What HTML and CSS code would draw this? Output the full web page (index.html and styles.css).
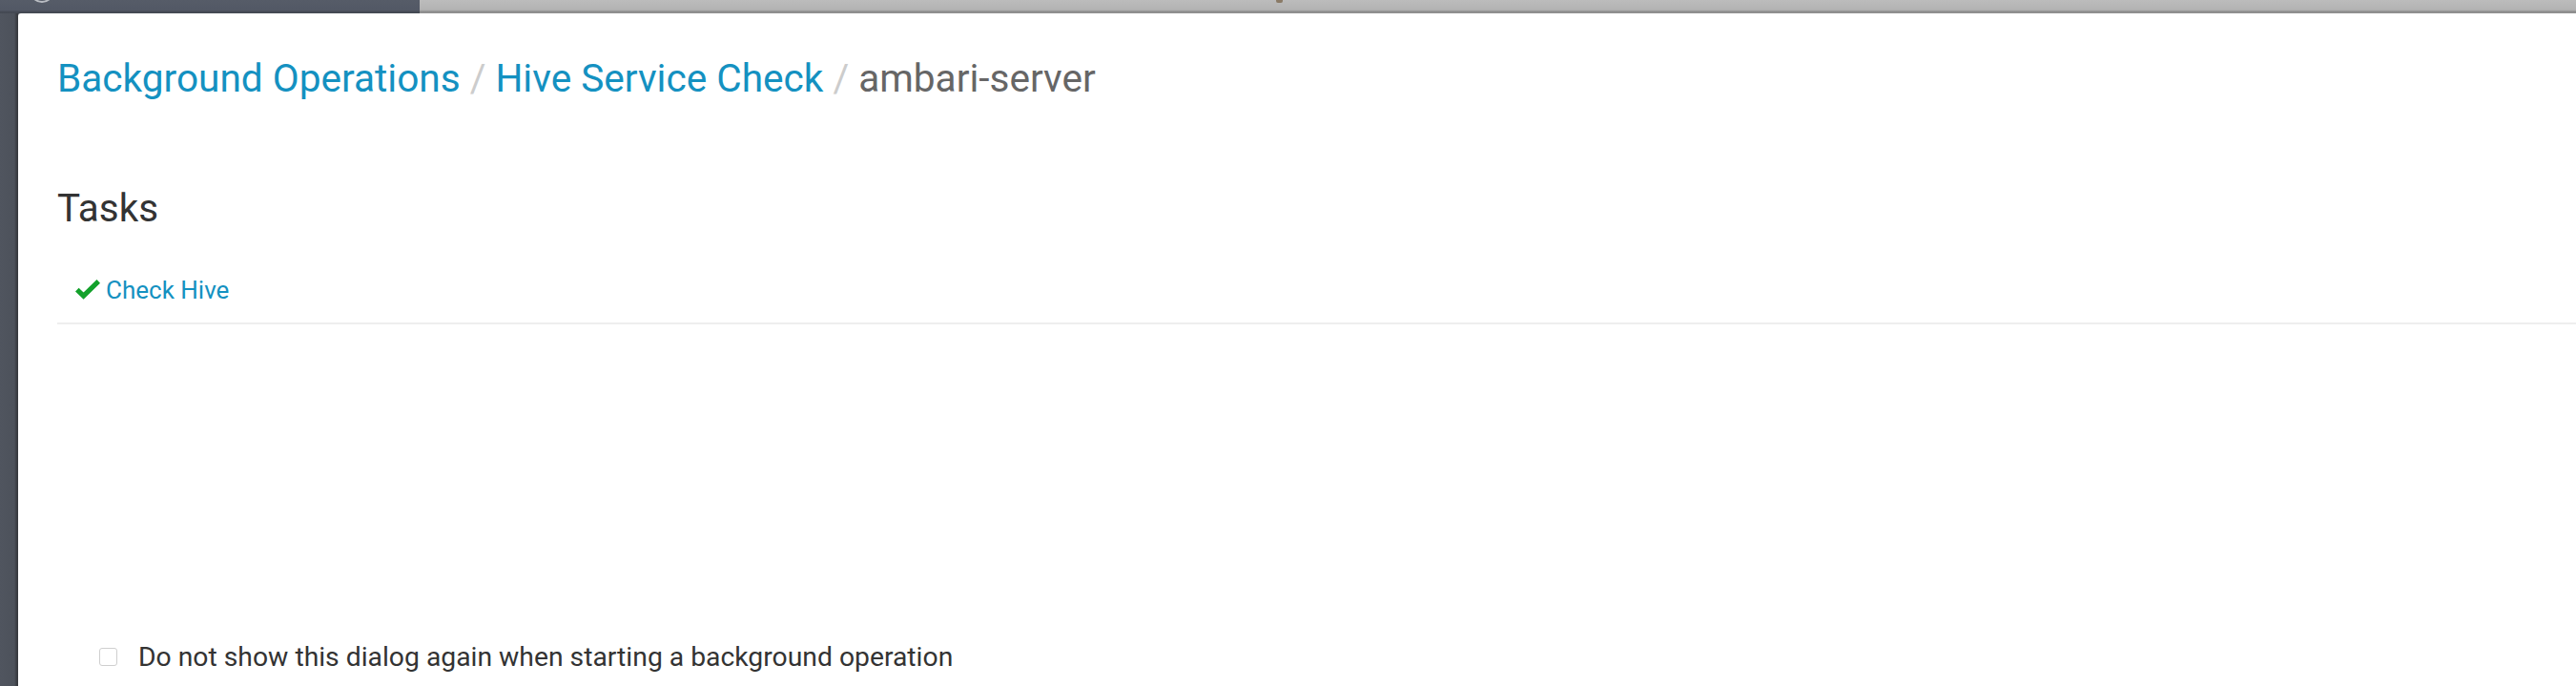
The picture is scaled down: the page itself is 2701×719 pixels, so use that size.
FILE: index.html
```html
<!DOCTYPE html>
<html lang="en">
<head>
<meta charset="utf-8">
<title>Background Operations</title>
<link rel="stylesheet" href="styles.css">
</head>
<body>
<div class="screen">
  <div class="topbar">
    <div class="topbar-dark"><span class="logo-ring"></span></div>
    <div class="topbar-light"><span class="topbar-mark"></span></div>
  </div>
  <div class="stage">
    <div class="gutter"></div>
    <div class="modal">
      <div class="modal-header">
        <nav class="breadcrumb">
          <a class="crumb">Background Operations</a><span class="crumb-sep">/</span><a class="crumb">Hive Service Check</a><span class="crumb-sep">/</span><span class="crumb-current">ambari-server</span>
        </nav>
      </div>
      <div class="modal-body">
        <h4 class="tasks-title">Tasks</h4>
        <div class="task-list">
          <div class="task-row">
            <svg class="icon-ok" viewBox="0 0 26 21" width="26" height="21" aria-hidden="true"><polyline points="1.8,10.6 8.6,17.2 24.3,1.9" fill="none" stroke="currentColor" stroke-width="5.2" stroke-linejoin="miter" stroke-linecap="butt"/></svg>
            <a class="task-link">Check Hive</a>
          </div>
        </div>
      </div>
      <div class="modal-footer">
        <label class="dont-show"><span class="checkbox"></span><span class="dont-show-text">Do not show this dialog again when starting a background operation</span></label>
      </div>
    </div>
  </div>
</div>
</body>
</html>
```
FILE: styles.css
```css
html, body {
  margin: 0;
  padding: 0;
  background: #50555f;
}

.screen {
  width: 2701px;
  height: 719px;
  overflow: hidden;
  display: flex;
  flex-direction: column;
  font-family: Roboto, "Liberation Sans", sans-serif;
}

.topbar {
  height: 14px;
  display: flex;
  flex: none;
}

.topbar-dark {
  width: 440px;
  background: linear-gradient(to bottom, #565c68 0, #525865 11px, #464b55 12px, #434852 14px);
  overflow: hidden;
  padding-left: 31px;
  box-sizing: border-box;
}

.logo-ring {
  display: block;
  width: 26px;
  height: 26px;
  margin-top: -23px;
  border-radius: 50%;
  border: 2px solid #b9bcc2;
  box-sizing: border-box;
}

.topbar-light {
  flex: 1;
  background: linear-gradient(to bottom, #bcbcbc 0, #b3b3b3 10px, #a9a9a9 11px, #8d8d8d 12px, #8a8a8a 13px, #9a9a9a 14px);
  overflow: hidden;
  padding-left: 898px;
}

.topbar-mark {
  display: block;
  width: 7px;
  height: 3px;
  background: #8a7a66;
  border-radius: 0 0 2px 2px;
}

.stage {
  flex: 1;
  display: flex;
  min-height: 0;
}

.gutter {
  width: 19px;
  flex: none;
  background: linear-gradient(to right, #50555f 0, #4d525b 15px, #3d4046 17px, #35383d 19px);
}

.modal {
  flex: 1;
  background: #ffffff;
  border-top-left-radius: 3px;
  padding-left: 41px;
  overflow: hidden;
  display: flex;
  flex-direction: column;
}

.modal-header {
  padding-top: 44px;
}

.breadcrumb {
  font-size: 40.6px;
  line-height: 48px;
  white-space: nowrap;
}

.crumb {
  color: #1491c1;
  text-decoration: none;
}

.crumb-sep {
  color: #cccccc;
  margin: 0 10px;
}

.crumb-current {
  color: #666666;
}

.modal-body {
  padding-top: 89px;
}

.tasks-title {
  margin: 0 0 26px 0;
  font-size: 40.4px;
  line-height: 48px;
  font-weight: 400;
  color: #333333;
}

.task-row {
  display: flex;
  align-items: center;
  gap: 6px;
  padding: 20px 0 18px 19px;
  border-bottom: 2px solid #eeeeee;
}

.icon-ok {
  color: #13a12b;
  flex: none;
  margin-top: -3px;
}

.task-link {
  font-size: 26px;
  line-height: 31px;
  color: #1491c1;
  text-decoration: none;
}

.modal-footer {
  margin-top: 332px;
  padding-left: 44px;
}

.dont-show {
  display: flex;
  align-items: center;
  gap: 22px;
  font-size: 28.3px;
  line-height: 33px;
  color: #333333;
}

.checkbox {
  width: 19px;
  height: 19px;
  box-sizing: border-box;
  border: 1px solid #cfcfcf;
  border-radius: 3px;
  background: #ffffff;
  flex: none;
}
```
